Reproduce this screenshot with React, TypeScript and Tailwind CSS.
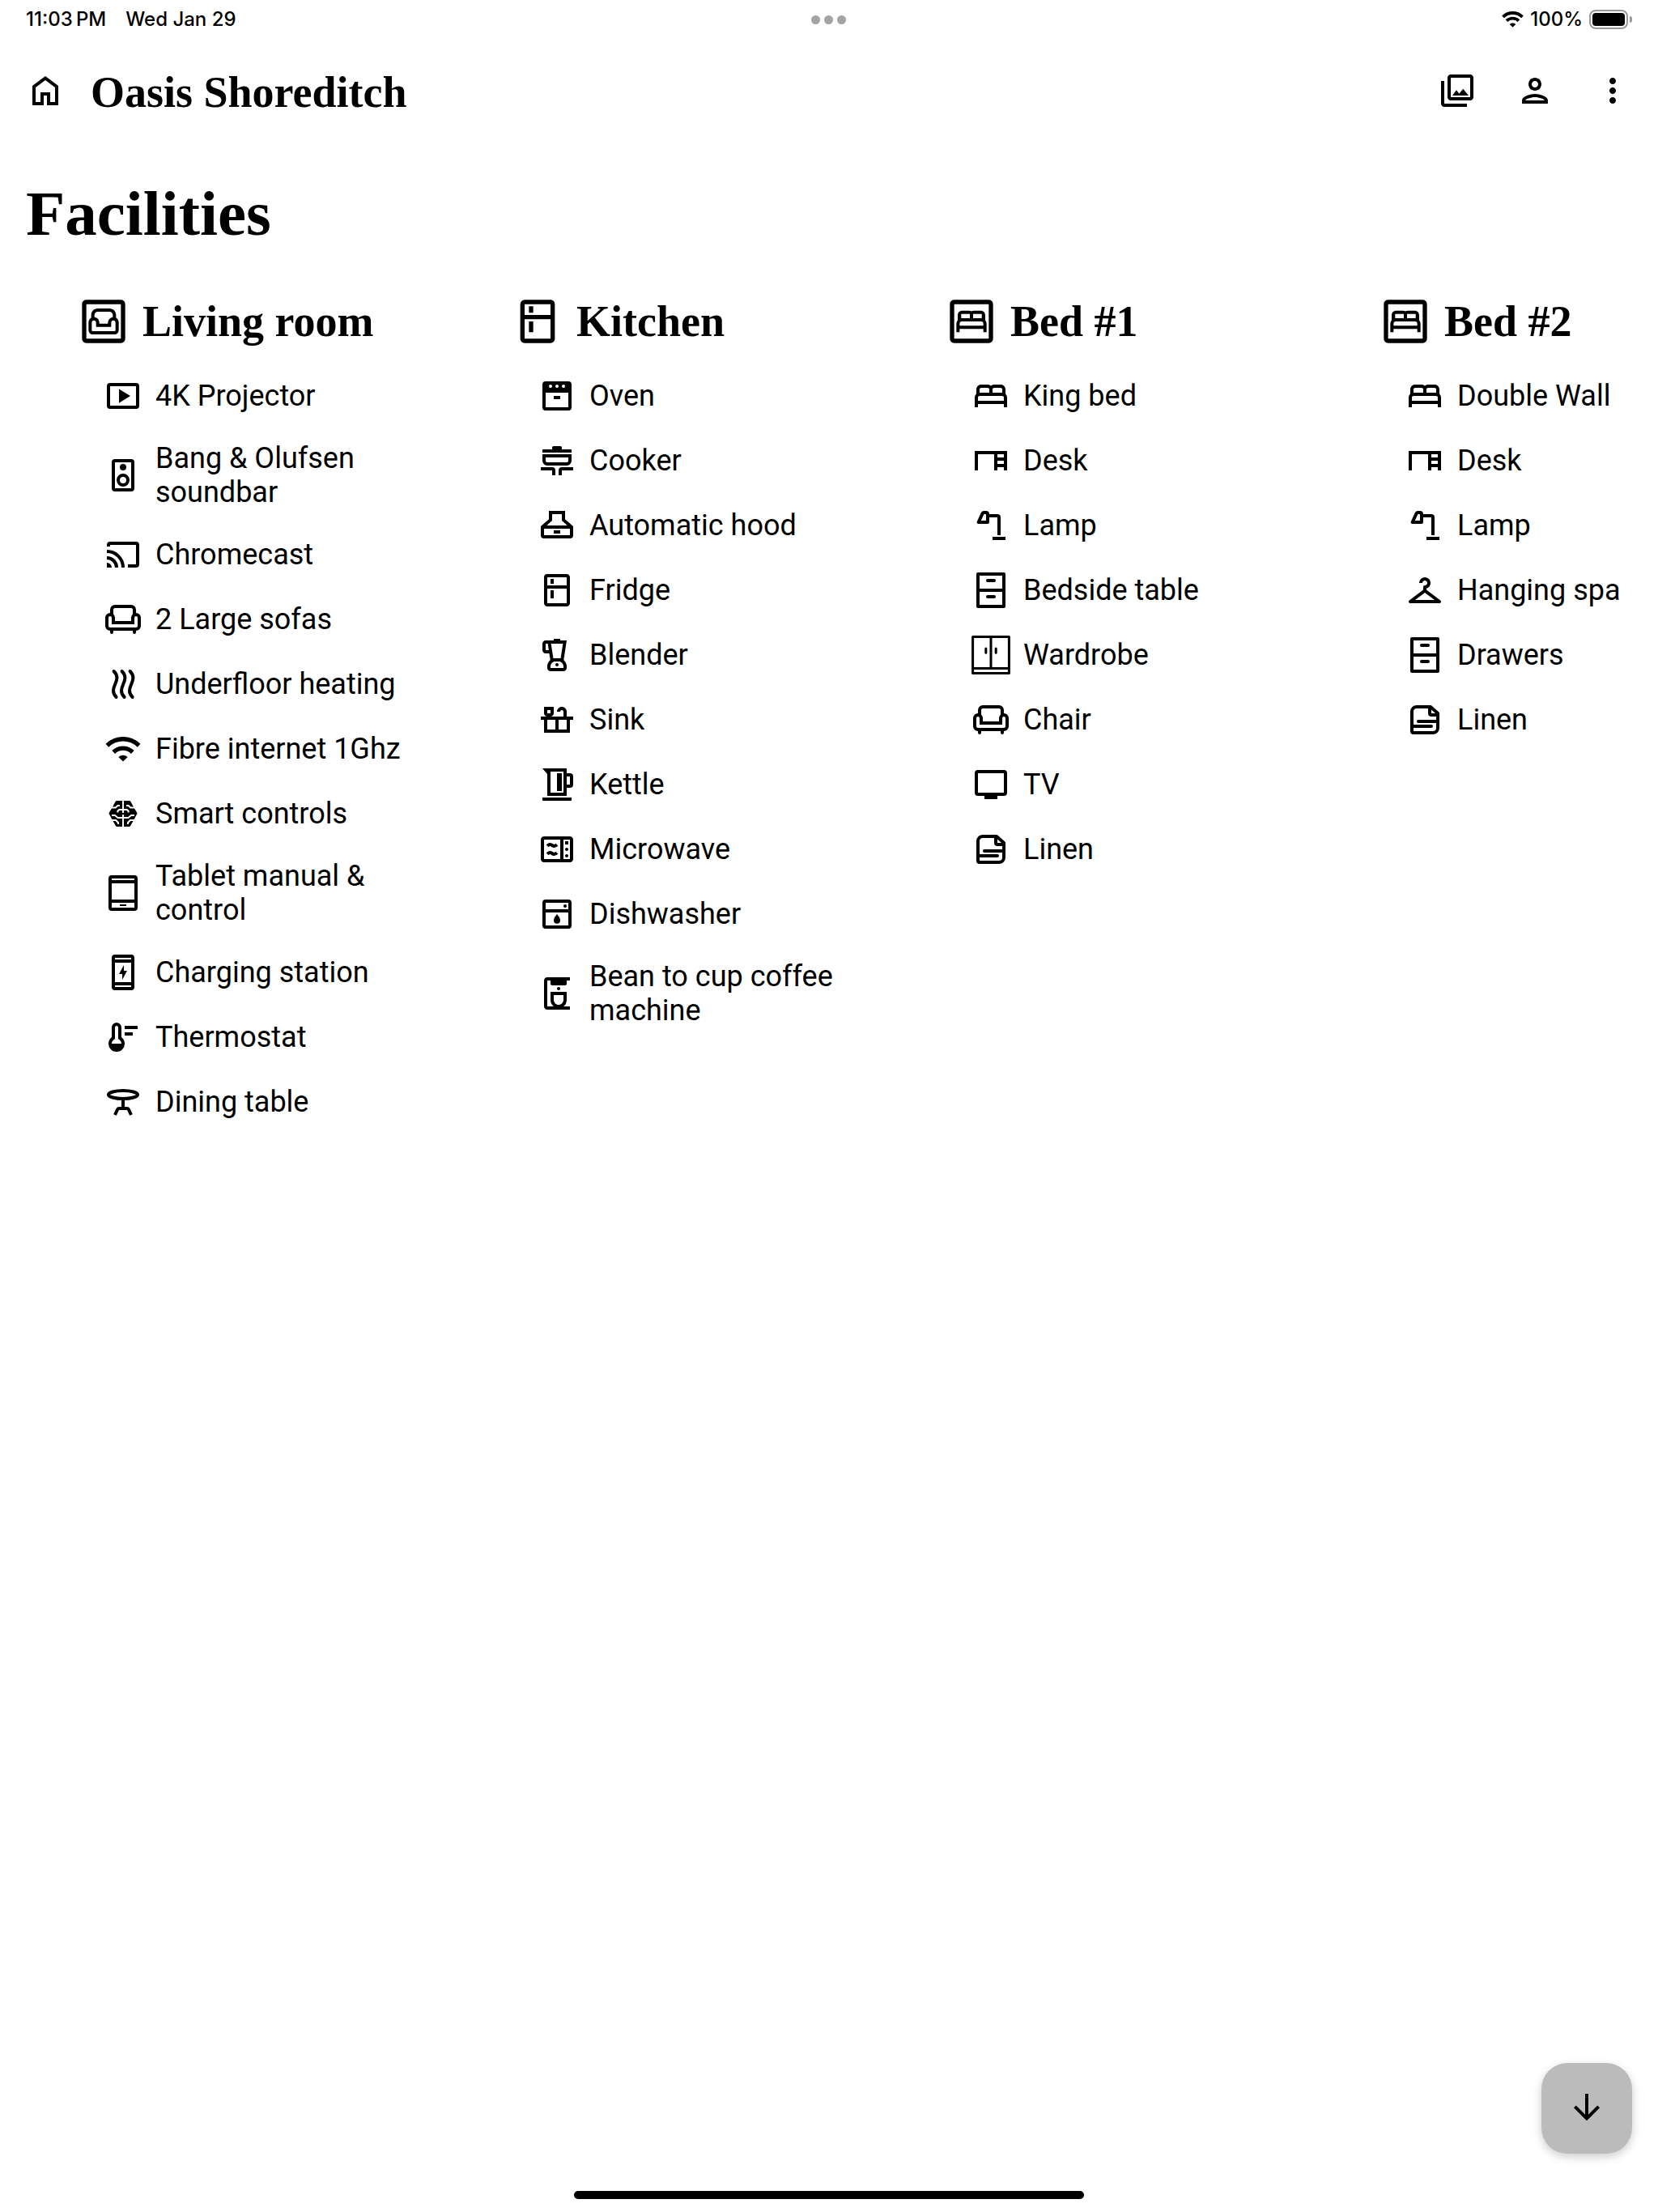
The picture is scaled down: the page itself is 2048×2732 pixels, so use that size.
import type { ComponentType, ReactNode } from "react";
import {
  MdMoreVert,
  MdOutlineBed,
  MdOutlineBedroomParent,
  MdOutlineBlender,
  MdOutlineCheckroom,
  MdOutlineCoffeeMaker,
  MdOutlineCountertops,
  MdOutlineDesk,
  MdOutlineKitchen,
  MdOutlineLiving,
  MdOutlineMicrowave,
  MdOutlinePerson,
  MdOutlinePhotoLibrary,
} from "react-icons/md";

type IconProps = { className?: string };
type IconType = ComponentType<IconProps>;

function Solid({ className, children }: IconProps & { children: ReactNode }) {
  return (
    <svg viewBox="0 0 24 24" className={className} fill="currentColor" fillRule="evenodd" aria-hidden="true">
      {children}
    </svg>
  );
}

function Line({ className, width = 2, children }: IconProps & { width?: number; children: ReactNode }) {
  return (
    <svg viewBox="0 0 24 24" className={className} fill="none" stroke="currentColor" strokeWidth={width} aria-hidden="true">
      {children}
    </svg>
  );
}

const House: IconType = (p) => (
  <Solid {...p}>
    <path d="M4 21V9l8-6 8 6v12h-7v-6h-2v6zM6 19h3v-6h6v6h3v-9l-6-4.500L6 10z" />
  </Solid>
);

const Projector: IconType = (p) => (
  <Line {...p}>
    <rect x="3" y="5" width="18" height="14" rx="1" />
    <path d="M9.5 7.7l7 4.3-7 4.4z" fill="currentColor" stroke="none" />
  </Line>
);

const Speaker: IconType = (p) => (
  <Line {...p}>
    <rect x="6" y="3" width="12" height="18" rx="1" />
    <circle cx="12" cy="7" r="2" fill="currentColor" stroke="none" />
    <circle cx="12" cy="15" r="3" />
  </Line>
);

const Cast: IconType = (p) => (
  <Line {...p}>
    <path d="M3 7V6a1 1 0 0 1 1-1h16a1 1 0 0 1 1 1v12a1 1 0 0 1-1 1h-5" />
    <path d="M2 10a10 10 0 0 1 10 10M2 14a6 6 0 0 1 6 6" />
    <path d="M2 17a3 3 0 0 1 3 3H2z" fill="currentColor" stroke="none" />
  </Line>
);

const Sofa: IconType = (p) => (
  <Line {...p}>
    <path d="M5 9V6a2 2 0 0 1 2-2h10a2 2 0 0 1 2 2v3" />
    <path d="M6 14v-3a2 2 0 0 0-4 0v5a2 2 0 0 0 2 2h16a2 2 0 0 0 2-2v-5a2 2 0 0 0-4 0v3z" />
    <path d="M5 18v2M19 18v2" strokeLinecap="round" />
  </Line>
);

const Heating: IconType = (p) => (
  <Line {...p}>
    <path
      strokeLinecap="round"
      d="M6.3 4c1.2 1.2 1.9 2.4 1.9 4.1 0 2.9-2.2 4.9-2.2 7.9 0 1.6.6 2.8 1.8 4M11.3 4c1.2 1.2 1.9 2.4 1.9 4.1 0 2.9-2.2 4.9-2.2 7.9 0 1.6.6 2.8 1.8 4M16.3 4c1.2 1.2 1.9 2.4 1.9 4.1 0 2.9-2.2 4.9-2.2 7.9 0 1.6.6 2.8 1.8 4"
    />
  </Line>
);

const Wifi: IconType = (p) => (
  <Line {...p} width={2.7}>
    <path d="M2.2 9.9a14 14 0 0 1 19.6 0M6.1 14a8.4 8.4 0 0 1 11.8 0" />
    <path d="M9.2 17a4.1 4.1 0 0 1 5.6 0L12 19.8z" fill="currentColor" stroke="none" />
  </Line>
);

const Brain: IconType = (p) => (
  <Solid {...p}>
    <path d="M8.200 4h3.300v7.500h1V4h3.300a1 1 0 0 1 .9.500L18.600 8l2.200 3.700-2 3.800-2.200 4a1 1 0 0 1-.9.500h-3.200v-7.500h-1V20H8.300a1 1 0 0 1-.9-.500l-2.200-4-2-3.800L5.400 8l1.900-3.500a1 1 0 0 1 .9-.500z" />
    <g fill="none" stroke="white" strokeWidth="1">
      <path d="M4.500 8.300h2.800l1.400-1.300h1.300M19.500 8.300h-2.800l-1.400-1.300H14" />
      <path d="M8.700 11.300v-1l1-.800h1.800M15.300 11.300v-1l-1-.800h-1.800" />
      <path d="M5 13h2l1.800 1.500h2.700M19 13h-2l-1.800 1.500h-2.700" />
      <path d="M4.500 16h3l1.500 1.500v1M19.500 16h-3L15 17.500v1" />
    </g>
  </Solid>
);

const Tablet: IconType = (p) => (
  <Line {...p}>
    <rect x="4" y="2" width="16" height="20" rx="1" />
    <path d="M4 5h16M4 17h16" />
    <path d="M10 19.5h4" strokeWidth="1" />
  </Line>
);

const Charging: IconType = (p) => (
  <Line {...p}>
    <rect x="6" y="2" width="12" height="20" rx="1" />
    <path d="M6 5h12M6 19h12" />
    <path d="M12.5 7.5V11h2L11.5 16.5V13h-2z" fill="currentColor" stroke="none" />
  </Line>
);

const Thermometer: IconType = (p) => (
  <Solid {...p}>
    <path d="M11 12V6a3 3 0 0 0-6 0v6a5 5 0 1 0 6 0zM7 13V6a1 1 0 0 1 2 0v7l.8.6c.7.6 1.2 1.4 1.2 2.4H5c0-1 .5-1.8 1.2-2.4z" />
    <path d="M13 5h8v2h-8zM13 9h5v2h-5z" />
  </Solid>
);

const DiningTable: IconType = (p) => (
  <Line {...p}>
    <ellipse cx="12" cy="7.5" rx="9" ry="2.5" />
    <path d="M12 10v6M7 20l1.6-3.4q.3-.6 1-.6h4.8q.7 0 1 .6L17 20" />
  </Line>
);

const Oven: IconType = (p) => (
  <Solid {...p}>
    <path d="M5 3h14a2 2 0 0 1 2 2v14a2 2 0 0 1-2 2H5a2 2 0 0 1-2-2V5a2 2 0 0 1 2-2zM5 10v9h14v-9zM8 5a1 1 0 1 0 0 2 1 1 0 0 0 0-2zM12 5a1 1 0 1 0 0 2 1 1 0 0 0 0-2zM16 5a1 1 0 1 0 0 2 1 1 0 0 0 0-2z" />
    <path d="M10 12h4v2h-4z" />
  </Solid>
);

const Cooker: IconType = (p) => (
  <Line {...p}>
    <path d="M9 5V4a1 1 0 0 1 1-1h4a1 1 0 0 1 1 1v1z" fill="currentColor" stroke="none" />
    <path d="M3 6h18M4 9h16v3a2 2 0 0 1-2 2H6a2 2 0 0 1-2-2z" />
    <path d="M2 17h7a1 1 0 0 1 1 1v3M22 17h-7a1 1 0 0 0-1 1v3" />
  </Line>
);

const Hood: IconType = (p) => (
  <Line {...p}>
    <path d="M8 4h8v4.6l5 4.4v5a1 1 0 0 1-1 1H4a1 1 0 0 1-1-1v-5l5-4.4zM3 13h18M10 16h4" />
  </Line>
);

const Kettle: IconType = (p) => (
  <Solid {...p}>
    <path d="M3 2h15v3h2a2 2 0 0 1 2 2v5a2 2 0 0 1-2 2h-2v5H6V5.5zM8 4v13h8V4zM18 7v5h2V7z" />
    <path d="M12 5h3v11h-3zM3 20h18v2H3z" />
  </Solid>
);

const Dishwasher: IconType = (p) => (
  <Line {...p}>
    <rect x="4" y="4" width="16" height="16" rx="1" />
    <path d="M4 10h16" />
    <circle cx="17" cy="7" r="1" fill="currentColor" stroke="none" />
    <path d="M12 12c1.300 1.500 2 2.700 2 3.900a2 2 0 0 1-4 0c0-1.200.7-2.400 2-3.900z" fill="currentColor" stroke="none" />
  </Line>
);

const Lamp: IconType = (p) => (
  <Line {...p}>
    <path d="M4.300 10l2.500-5.400Q7.100 4 7.700 4H9a1 1 0 0 1 1 1v5z" strokeLinejoin="round" />
    <path d="M10 6h6a1 1 0 0 1 1 1v11M13 20h8" />
  </Line>
);

const Drawers: IconType = (p) => (
  <Line {...p}>
    <rect x="4" y="2" width="16" height="20" strokeLinejoin="round" />
    <path d="M4 12h16" />
    <path d="M10 6h4M10 16h4" strokeLinecap="round" />
  </Line>
);

const Wardrobe: IconType = (p) => (
  <Line {...p} width={1.5}>
    <path d="M.8.800h22.400v22.400H.8zM12 .8v19.400M.8 20.200h22.400" strokeLinejoin="round" />
    <path d="M8.900 8v2.600M15.100 8v2.600" strokeLinecap="round" />
  </Line>
);

const Television: IconType = (p) => (
  <Line {...p}>
    <rect x="3" y="4" width="18" height="14" rx="1" />
    <path d="M8 20h8" />
  </Line>
);

const Linen: IconType = (p) => (
  <Line {...p}>
    <path d="M5 20a1 1 0 0 1-1-1V7a3 3 0 0 1 3-3h8.500L20 8v9a3 3 0 0 1-3 3z" strokeLinejoin="round" />
    <path d="M15 4v4a1 1 0 0 0 1 1h4" />
    <path d="M8 13h12M4 15q.5 1 1.500 1H16" strokeLinecap="round" />
  </Line>
);

const ArrowDown: IconType = (p) => (
  <Line {...p}>
    <path d="M12 3v15M4.700 10.900l7.300 7.300 7.300-7.300" />
  </Line>
);

type Facility = { label: string; icon: IconType };
type Room = { name: string; icon: IconType; items: Facility[] };

const rooms: Room[] = [
  {
    name: "Living room",
    icon: MdOutlineLiving,
    items: [
      { label: "4K Projector", icon: Projector },
      { label: "Bang & Olufsen soundbar", icon: Speaker },
      { label: "Chromecast", icon: Cast },
      { label: "2 Large sofas", icon: Sofa },
      { label: "Underfloor heating", icon: Heating },
      { label: "Fibre internet 1Ghz", icon: Wifi },
      { label: "Smart controls", icon: Brain },
      { label: "Tablet manual & control", icon: Tablet },
      { label: "Charging station", icon: Charging },
      { label: "Thermostat", icon: Thermometer },
      { label: "Dining table", icon: DiningTable },
    ],
  },
  {
    name: "Kitchen",
    icon: MdOutlineKitchen,
    items: [
      { label: "Oven", icon: Oven },
      { label: "Cooker", icon: Cooker },
      { label: "Automatic hood", icon: Hood },
      { label: "Fridge", icon: MdOutlineKitchen },
      { label: "Blender", icon: MdOutlineBlender },
      { label: "Sink", icon: MdOutlineCountertops },
      { label: "Kettle", icon: Kettle },
      { label: "Microwave", icon: MdOutlineMicrowave },
      { label: "Dishwasher", icon: Dishwasher },
      { label: "Bean to cup coffee machine", icon: MdOutlineCoffeeMaker },
    ],
  },
  {
    name: "Bed #1",
    icon: MdOutlineBedroomParent,
    items: [
      { label: "King bed", icon: MdOutlineBed },
      { label: "Desk", icon: MdOutlineDesk },
      { label: "Lamp", icon: Lamp },
      { label: "Bedside table", icon: Drawers },
      { label: "Wardrobe", icon: Wardrobe },
      { label: "Chair", icon: Sofa },
      { label: "TV", icon: Television },
      { label: "Linen", icon: Linen },
    ],
  },
  {
    name: "Bed #2",
    icon: MdOutlineBedroomParent,
    items: [
      { label: "Double Wall", icon: MdOutlineBed },
      { label: "Desk", icon: MdOutlineDesk },
      { label: "Lamp", icon: Lamp },
      { label: "Hanging spa", icon: MdOutlineCheckroom },
      { label: "Drawers", icon: Drawers },
      { label: "Linen", icon: Linen },
    ],
  },
];

function StatusBar() {
  return (
    <div className="grid h-12 grid-cols-3 items-center px-8 font-['Inter',sans-serif] text-[24px] leading-7 font-medium">
      <div className="flex gap-6">
        <span>11:03{"\u2009"}PM</span>
        <span>Wed Jan 29</span>
      </div>
      <div className="flex justify-center gap-[5px]">
        <span className="size-[11px] rounded-full bg-[#a3a3a3]" />
        <span className="size-[11px] rounded-full bg-[#a3a3a3]" />
        <span className="size-[11px] rounded-full bg-[#a3a3a3]" />
      </div>
      <div className="flex items-center justify-end gap-2">
        <svg viewBox="0 0 27 20" className="h-5 w-[27px]" fill="none" stroke="currentColor" strokeWidth="3.800" aria-hidden="true">
          <path d="M1.500 6.800a17.400 17.400 0 0 1 24 0M6 11.600a10.800 10.800 0 0 1 15 0" />
          <path d="M9.700 15.900a5.600 5.600 0 0 1 7.600 0L13.500 19.800z" fill="currentColor" stroke="none" />
        </svg>
        <span>100%</span>
        <span className="flex items-center gap-[2px]">
          <span className="flex h-6 w-12 rounded-lg border-2 border-[#999] p-[2px]">
            <span className="flex-1 rounded-[4px] bg-black" />
          </span>
          <span className="h-2 w-[3px] rounded-r-full bg-[#999]" />
        </span>
      </div>
    </div>
  );
}

function Header() {
  return (
    <header className="flex h-32 items-center px-8">
      <button type="button" aria-label="Home">
        <House className="size-12" />
      </button>
      <p className="ml-8 flex-1 pt-1 font-['Liberation_Serif',serif] text-[54px] leading-[64px] font-bold">Oasis Shoreditch</p>
      <div className="flex items-center gap-12">
        <button type="button" aria-label="Gallery">
          <MdOutlinePhotoLibrary className="size-12" />
        </button>
        <button type="button" aria-label="Account">
          <MdOutlinePerson className="size-12" />
        </button>
        <button type="button" aria-label="More options">
          <MdMoreVert className="size-12" />
        </button>
      </div>
    </header>
  );
}

function RoomColumn({ room }: { room: Room }) {
  const RoomIcon = room.icon;
  return (
    <section className="w-[536px] shrink-0 pr-28">
      <div className="flex items-center gap-4">
        <RoomIcon className="size-16 shrink-0" />
        <h2 className="font-['Liberation_Serif',serif] text-[54px] leading-[64px] font-bold whitespace-nowrap">{room.name}</h2>
      </div>
      <ul className="mt-5 pl-8">
        {room.items.map(({ label, icon: Icon }) => (
          <li key={label} className="flex items-center gap-4 py-4">
            <Icon className="size-12 shrink-0" />
            <span>{label}</span>
          </li>
        ))}
      </ul>
    </section>
  );
}

export default function App() {
  return (
    <div className="flex min-h-screen flex-col bg-white font-['Roboto',sans-serif] text-[36px] leading-[42px] text-black">
      <StatusBar />
      <Header />
      <main className="flex-1">
        <h1 className="mt-10 px-8 font-['Liberation_Serif',serif] text-[79px] leading-[96px] font-bold">Facilities</h1>
        <div className="mt-[53px] flex overflow-hidden pl-24">
          {rooms.map((room) => (
            <RoomColumn key={room.name} room={room} />
          ))}
        </div>
      </main>
      <button
        type="button"
        aria-label="Scroll down"
        className="fixed right-8 bottom-[72px] flex size-28 items-center justify-center rounded-[32px] bg-[#bbb] shadow-[0_4px_12px_rgba(0,0,0,0.2)]"
      >
        <ArrowDown className="size-12" />
      </button>
      <div className="fixed bottom-4 left-1/2 h-[10px] w-[630px] -translate-x-1/2 rounded-full bg-black" />
    </div>
  );
}
